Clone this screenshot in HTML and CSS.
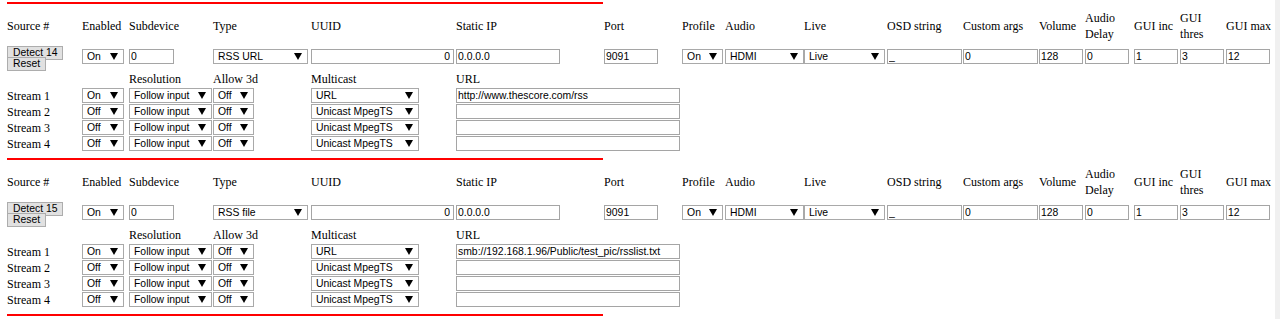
FILE: index.html
```html
<!DOCTYPE html>
<html lang="en">
<head>
    <meta charset="UTF-8">
    <title>Sources</title>
    <link rel="stylesheet" href="styles.css">
</head>
<body>
    <table class="sources">
        <colgroup>
            <col style="width: 75px"><col style="width: 47px"><col style="width: 84px"><col style="width: 98px">
            <col style="width: 145px"><col style="width: 148px"><col style="width: 78px"><col style="width: 43px">
            <col style="width: 79px"><col style="width: 83px"><col style="width: 76px"><col style="width: 76px">
            <col style="width: 46px"><col style="width: 49px"><col style="width: 46px"><col style="width: 46px">
            <col style="width: 46px">
        </colgroup>

        <tbody>
            <tr class="rule"><td colspan="6"><div class="line"></div></td><td colspan="11"></td></tr>
            <tr class="head">
                <td>Source #</td><td>Enabled</td><td>Subdevice</td><td>Type</td><td>UUID</td><td>Static IP</td>
                <td>Port</td><td>Profile</td><td>Audio</td><td>Live</td><td>OSD string</td><td>Custom args</td>
                <td>Volume</td><td>Audio<br>Delay</td><td>GUI inc</td><td>GUI<br>thres</td><td>GUI max</td>
            </tr>
            <tr class="controls">
                <td class="buttons">
                    <button type="button" class="detect">Detect 14</button>
                    <button type="button" class="reset">Reset</button>
                </td>
                <td><select class="w-onoff"><option>On</option><option>Off</option></select></td>
                <td><input type="text" class="w-subdev" value="0"></td>
                <td><select class="w-type"><option>RSS URL</option><option>RSS file</option></select></td>
                <td><input type="text" class="w-uuid" value="0"></td>
                <td><input type="text" class="w-ip" value="0.0.0.0"></td>
                <td><input type="text" class="w-port" value="9091"></td>
                <td><select class="w-profile"><option>On</option><option>Off</option></select></td>
                <td><select class="w-audio"><option>HDMI</option></select></td>
                <td><select class="w-live"><option>Live</option></select></td>
                <td><input type="text" class="w-text" value="_"></td>
                <td><input type="text" class="w-text" value="0"></td>
                <td><input type="text" class="w-num" value="128"></td>
                <td><input type="text" class="w-num" value="0"></td>
                <td><input type="text" class="w-num" value="1"></td>
                <td><input type="text" class="w-num" value="3"></td>
                <td><input type="text" class="w-num" value="12"></td>
            </tr>
            <tr class="subhead">
                <td></td><td></td><td>Resolution</td><td>Allow 3d</td><td>Multicast</td><td colspan="2">URL</td><td colspan="10"></td>
            </tr>
            <tr class="stream">
                <td>Stream 1</td>
                <td><select class="w-onoff"><option>On</option><option>Off</option></select></td>
                <td><select class="w-res"><option>Follow input</option></select></td>
                <td><select class="w-3d"><option>Off</option><option>On</option></select></td>
                <td><select class="w-mcast"><option>URL</option><option>Unicast MpegTS</option></select></td>
                <td colspan="2"><input type="text" class="w-url" value="http://www.thescore.com/rss"></td>
                <td colspan="10"></td>
            </tr>
            <tr class="stream">
                <td>Stream 2</td>
                <td><select class="w-onoff"><option>Off</option><option>On</option></select></td>
                <td><select class="w-res"><option>Follow input</option></select></td>
                <td><select class="w-3d"><option>Off</option><option>On</option></select></td>
                <td><select class="w-mcast"><option>Unicast MpegTS</option><option>URL</option></select></td>
                <td colspan="2"><input type="text" class="w-url" value=""></td>
                <td colspan="10"></td>
            </tr>
            <tr class="stream">
                <td>Stream 3</td>
                <td><select class="w-onoff"><option>Off</option><option>On</option></select></td>
                <td><select class="w-res"><option>Follow input</option></select></td>
                <td><select class="w-3d"><option>Off</option><option>On</option></select></td>
                <td><select class="w-mcast"><option>Unicast MpegTS</option><option>URL</option></select></td>
                <td colspan="2"><input type="text" class="w-url" value=""></td>
                <td colspan="10"></td>
            </tr>
            <tr class="stream last">
                <td>Stream 4</td>
                <td><select class="w-onoff"><option>Off</option><option>On</option></select></td>
                <td><select class="w-res"><option>Follow input</option></select></td>
                <td><select class="w-3d"><option>Off</option><option>On</option></select></td>
                <td><select class="w-mcast"><option>Unicast MpegTS</option><option>URL</option></select></td>
                <td colspan="2"><input type="text" class="w-url" value=""></td>
                <td colspan="10"></td>
            </tr>
        </tbody>

        <tbody>
            <tr class="rule"><td colspan="6"><div class="line"></div></td><td colspan="11"></td></tr>
            <tr class="head">
                <td>Source #</td><td>Enabled</td><td>Subdevice</td><td>Type</td><td>UUID</td><td>Static IP</td>
                <td>Port</td><td>Profile</td><td>Audio</td><td>Live</td><td>OSD string</td><td>Custom args</td>
                <td>Volume</td><td>Audio<br>Delay</td><td>GUI inc</td><td>GUI<br>thres</td><td>GUI max</td>
            </tr>
            <tr class="controls">
                <td class="buttons">
                    <button type="button" class="detect">Detect 15</button>
                    <button type="button" class="reset">Reset</button>
                </td>
                <td><select class="w-onoff"><option>On</option><option>Off</option></select></td>
                <td><input type="text" class="w-subdev" value="0"></td>
                <td><select class="w-type"><option>RSS file</option><option>RSS URL</option></select></td>
                <td><input type="text" class="w-uuid" value="0"></td>
                <td><input type="text" class="w-ip" value="0.0.0.0"></td>
                <td><input type="text" class="w-port" value="9091"></td>
                <td><select class="w-profile"><option>On</option><option>Off</option></select></td>
                <td><select class="w-audio"><option>HDMI</option></select></td>
                <td><select class="w-live"><option>Live</option></select></td>
                <td><input type="text" class="w-text" value="_"></td>
                <td><input type="text" class="w-text" value="0"></td>
                <td><input type="text" class="w-num" value="128"></td>
                <td><input type="text" class="w-num" value="0"></td>
                <td><input type="text" class="w-num" value="1"></td>
                <td><input type="text" class="w-num" value="3"></td>
                <td><input type="text" class="w-num" value="12"></td>
            </tr>
            <tr class="subhead">
                <td></td><td></td><td>Resolution</td><td>Allow 3d</td><td>Multicast</td><td colspan="2">URL</td><td colspan="10"></td>
            </tr>
            <tr class="stream">
                <td>Stream 1</td>
                <td><select class="w-onoff"><option>On</option><option>Off</option></select></td>
                <td><select class="w-res"><option>Follow input</option></select></td>
                <td><select class="w-3d"><option>Off</option><option>On</option></select></td>
                <td><select class="w-mcast"><option>URL</option><option>Unicast MpegTS</option></select></td>
                <td colspan="2"><input type="text" class="w-url" value="smb://192.168.1.96/Public/test_pic/rsslist.txt"></td>
                <td colspan="10"></td>
            </tr>
            <tr class="stream">
                <td>Stream 2</td>
                <td><select class="w-onoff"><option>Off</option><option>On</option></select></td>
                <td><select class="w-res"><option>Follow input</option></select></td>
                <td><select class="w-3d"><option>Off</option><option>On</option></select></td>
                <td><select class="w-mcast"><option>Unicast MpegTS</option><option>URL</option></select></td>
                <td colspan="2"><input type="text" class="w-url" value=""></td>
                <td colspan="10"></td>
            </tr>
            <tr class="stream">
                <td>Stream 3</td>
                <td><select class="w-onoff"><option>Off</option><option>On</option></select></td>
                <td><select class="w-res"><option>Follow input</option></select></td>
                <td><select class="w-3d"><option>Off</option><option>On</option></select></td>
                <td><select class="w-mcast"><option>Unicast MpegTS</option><option>URL</option></select></td>
                <td colspan="2"><input type="text" class="w-url" value=""></td>
                <td colspan="10"></td>
            </tr>
            <tr class="stream last">
                <td>Stream 4</td>
                <td><select class="w-onoff"><option>Off</option><option>On</option></select></td>
                <td><select class="w-res"><option>Follow input</option></select></td>
                <td><select class="w-3d"><option>Off</option><option>On</option></select></td>
                <td><select class="w-mcast"><option>Unicast MpegTS</option><option>URL</option></select></td>
                <td colspan="2"><input type="text" class="w-url" value=""></td>
                <td colspan="10"></td>
            </tr>
        </tbody>

        <tbody>
            <tr class="rule"><td colspan="6"><div class="line"></div></td><td colspan="11"></td></tr>
        </tbody>
    </table>
</body>
</html>
```

FILE: styles.css
```css
html {
    background: linear-gradient(to left, #f0f0f0 5px, #fff 5px);
}
body {
    margin: 2px 0 0 7px;
    font-family: "Liberation Serif", "Times New Roman", serif;
    font-size: 12px;
    line-height: 16px;
    color: #000;
}
.sources {
    width: 1265px;
    table-layout: fixed;
    border-collapse: collapse;
}
.sources td {
    padding: 0;
    vertical-align: middle;
    white-space: nowrap;
}
.rule td {
    height: 6px;
    vertical-align: top;
}
.line {
    height: 2px;
    margin-right: 1px;
    background-color: #f00;
}
.head td {
    height: 35px;
}
.controls td {
    height: 28px;
}
.controls td.buttons {
    vertical-align: bottom;
}
.subhead td {
    height: 17px;
    vertical-align: top;
}
.stream td {
    height: 16px;
}
.stream.last td {
    padding-bottom: 6px;
}

input, select, button {
    font-family: "Liberation Sans", Arial, sans-serif;
    font-size: 10.4px;
    color: #000;
    box-sizing: border-box;
    margin: 0;
    vertical-align: top;
}
input {
    height: 15px;
    padding: 0 1px;
    border: 1px solid #a5a5a5;
    background: #fff;
    line-height: 13px;
}
select {
    -webkit-appearance: none;
    appearance: none;
    height: 15px;
    padding: 0 0 0 4px;
    border: 1px solid #a9a9a9;
    border-radius: 0;
    line-height: 13px;
    background: #fff url("data:image/svg+xml,%3Csvg xmlns='http://www.w3.org/2000/svg' width='8' height='7'%3E%3Cpath d='M0 0h8L4 7z'/%3E%3C/svg%3E") no-repeat right 5px center;
}
button {
    display: block;
    height: 14px;
    padding: 0 5px;
    border: 1px solid #adadad;
    border-radius: 0;
    background: #e1e1e1;
    line-height: 12px;
}
button.detect {
    padding-bottom: 3px;
    margin-bottom: -3px;
}

.w-onoff { width: 42px; }
.w-subdev { width: 45px; }
.w-type { width: 95px; }
.w-uuid { width: 143px; text-align: right; padding-right: 3px; }
.w-ip { width: 104px; }
.w-port { width: 54px; }
.w-profile { width: 41px; }
.w-audio { width: 79px; }
.w-live { width: 81px; }
.w-text { width: 75px; }
.w-num { width: 44px; }
.w-res { width: 83px; }
.w-3d { width: 41px; }
.w-mcast { width: 108px; }
.w-url { width: 224px; }
```
